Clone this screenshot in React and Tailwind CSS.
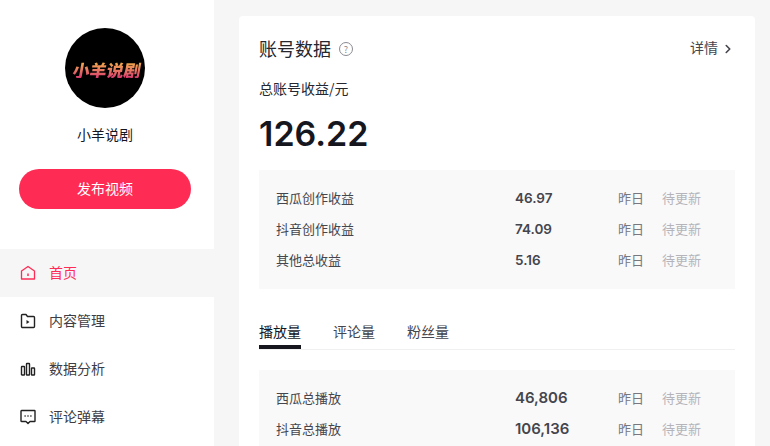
import { ChevronRight } from 'lucide-react'

const cjk = "font-['Noto_Sans_CJK_SC','Noto_Sans',sans-serif]"

const income = [
  { label: '西瓜创作收益', value: '46.97' },
  { label: '抖音创作收益', value: '74.09' },
  { label: '其他总收益', value: '5.16' },
]

const plays = [
  { label: '西瓜总播放', value: '46,806' },
  { label: '抖音总播放', value: '106,136' },
]

function HomeIcon() {
  return (
    <svg width="16" height="16" viewBox="0 0 16 16" fill="none" stroke="#fe2c55" strokeWidth="1.300">
      <path d="M1.500 6 8 1.500 14.500 6v8h-13z" strokeLinejoin="round" />
      <path d="M8 8.500v2.500" strokeWidth="1.500" />
    </svg>
  )
}

function FolderIcon() {
  return (
    <svg width="16" height="16" viewBox="0 0 16 16" fill="none" stroke="#222" strokeWidth="1.400">
      <path d="M1.500 2.500a1 1 0 0 1 1-1h3.500l1.500 2h6a1 1 0 0 1 1 1v9a1 1 0 0 1-1 1h-11a1 1 0 0 1-1-1z" strokeLinejoin="round" />
      <path d="M6.500 7v4l3-2z" fill="#222" stroke="none" />
    </svg>
  )
}

function BarsIcon() {
  return (
    <svg width="16" height="16" viewBox="0 0 16 16" fill="none" stroke="#222" strokeWidth="1.400">
      <rect x="1.500" y="5.500" width="3" height="8.500" rx="0.500" />
      <rect x="6.500" y="2.500" width="3" height="11.500" rx="0.500" />
      <rect x="11.500" y="7" width="3" height="7" rx="0.500" />
    </svg>
  )
}

function CommentIcon() {
  return (
    <svg width="16" height="16" viewBox="0 0 16 16" fill="none" stroke="#222" strokeWidth="1.400">
      <path d="M1.500 1.500h13a.5.5 0 0 1 .5.5v10a.5.5 0 0 1-.5.5H10l-2 2-2-2H1.500a.5.5 0 0 1-.5-.5V2a.5.5 0 0 1 .5-.5z" strokeLinejoin="round" />
      <path d="M4.500 7h1.200M7.400 7h1.200M10.300 7h1.200" strokeWidth="1.600" />
    </svg>
  )
}

function NavItem({ icon, label, active }) {
  return (
    <div className={`flex h-12 items-center gap-[13px] pl-5 text-[14px] ${active ? 'bg-[#f6f6f6] text-[#fe2c55]' : 'text-[#3d3d45]'}`}>
      {icon}
      <span className="pb-[2px]">{label}</span>
    </div>
  )
}

function StatRow({ label, value, big }) {
  return (
    <div className="flex h-[31px] items-center pl-[17px] text-[13px]">
      <span className="w-[239px] pb-[2px] text-[#45454d]">{label}</span>
      <span className={`w-[103px] font-['Inter',sans-serif] font-semibold text-[#45454d] ${big ? 'text-[15px]' : 'text-[13.500px]'}`}>{value}</span>
      <span className="w-[44px] pb-[2px] text-[#77777f]">昨日</span>
      <span className="pb-[2px] text-[#b4b4ba]">待更新</span>
    </div>
  )
}

export default function App() {
  return (
    <div className={`flex h-[446px] w-[770px] overflow-hidden bg-[#f6f6f6] ${cjk}`}>
      {/* Sidebar */}
      <aside className="h-full w-[214px] shrink-0 bg-white">
        <div className="flex flex-col items-center pt-7 pr-1">
          <div className="flex h-20 w-20 items-center justify-center rounded-full bg-black pt-[2px] pl-[3px]">
            <span className="skew-x-[-10deg] bg-gradient-to-b from-[#f2b33c] to-[#d9366e] bg-clip-text text-[17px] leading-none font-black whitespace-nowrap text-transparent">
              小羊说剧
            </span>
          </div>
          <div className="mt-4 text-[14px] leading-[20px] text-[#16161e]">小羊说剧</div>
          <button className="mt-[25px] h-10 w-[172px] rounded-[20px] bg-[#fe2c55] pb-[2px] text-[14px] text-white">发布视频</button>
        </div>
        <nav className="mt-10">
          <NavItem icon={<HomeIcon />} label="首页" active />
          <NavItem icon={<FolderIcon />} label="内容管理" />
          <NavItem icon={<BarsIcon />} label="数据分析" />
          <NavItem icon={<CommentIcon />} label="评论弹幕" />
        </nav>
      </aside>

      {/* Main */}
      <main className="min-w-0 flex-1 pt-4 pr-[15px] pl-[25px]">
        <div className="h-[460px] rounded-t bg-white px-5 pt-[19px]">
          <div className="flex h-7 items-center justify-between">
            <div className="flex items-center gap-2">
              <h1 className="pb-[2px] text-[18px] leading-7 font-normal text-[#26262e]">账号数据</h1>
              <span className="flex h-[14px] w-[14px] items-center justify-center rounded-full border border-[#8a8a92] text-[9px] leading-none text-[#8a8a92]">?</span>
            </div>
            <div className="flex items-center text-[14px] text-[#45454d]">
              <span className="pb-[3px]">详情</span>
              <ChevronRight size={14} strokeWidth={2.800} className="ml-[3px] mb-[1px] text-[#45454d]" />
            </div>
          </div>
          <div className="mt-[15px] text-[14px] leading-[20px] text-[#26262e]">总账号收益/元</div>
          <div className="mt-[11px] font-['Inter',sans-serif] text-[34px] leading-[50px] font-semibold text-[#16161e]">126.22</div>

          <div className="mt-[11px] bg-[#f9f9f9] py-[13px]">
            {income.map(row => <StatRow key={row.label} {...row} />)}
          </div>

          <div className="mt-[30px] flex gap-8 border-b border-[#f0f0f0] text-[14px]">
            <div className="h-[30px] border-b-[4px] border-[#16161e] leading-[24px] text-[#16161e]">播放量</div>
            <div className="leading-[24px] text-[#45454d]">评论量</div>
            <div className="leading-[24px] text-[#45454d]">粉丝量</div>
          </div>

          <div className="mt-5 bg-[#f9f9f9] py-[13px]">
            {plays.map(row => <StatRow key={row.label} {...row} big />)}
          </div>
        </div>
      </main>
    </div>
  )
}
